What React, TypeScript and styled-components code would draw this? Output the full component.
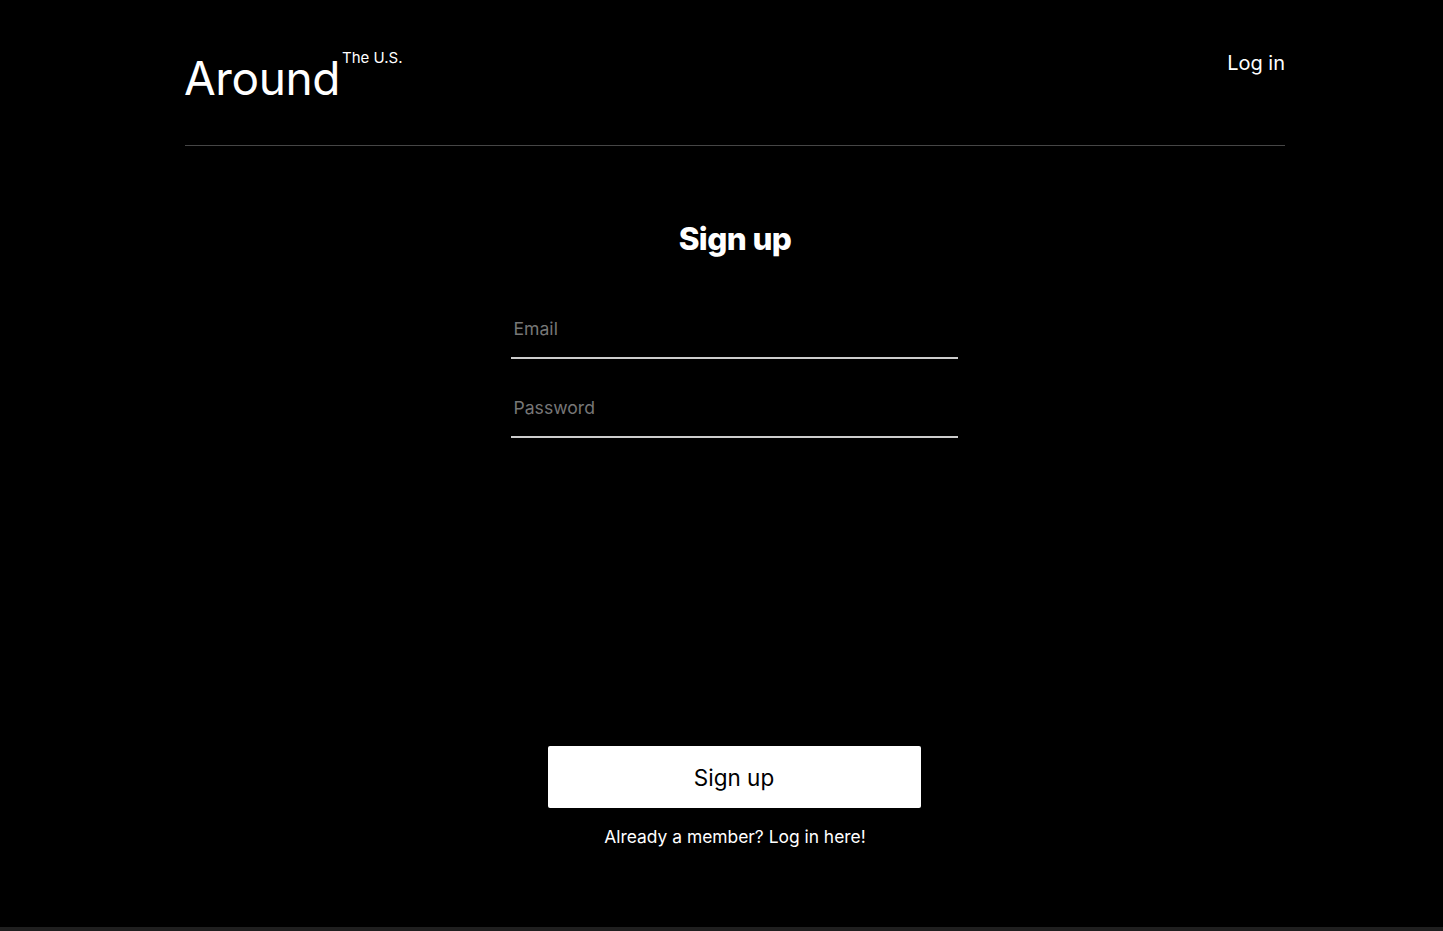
import React from "react";
import styled, { createGlobalStyle } from "styled-components";

const Global = createGlobalStyle`
  html, body { margin: 0; padding: 0; background: #1f1f1f; }
  body { font-family: Inter, "Noto Sans", sans-serif; color: #fff; }
  * { box-sizing: border-box; }
`;

const Page = styled.div`
  background: #000;
  height: 927px;
  display: flex;
  flex-direction: column;
  align-items: center;
  padding-left: 27px;
`;

const Header = styled.header`
  width: 1100px;
  height: 146px;
  border-bottom: 1px solid #464646;
  display: flex;
  justify-content: space-between;
  align-items: flex-start;
`;

const Logo = styled.div`
  display: flex;
  align-items: flex-start;
  margin-top: 49px;
  margin-left: -1px;
`;

const LogoMain = styled.span`
  font-size: 46px;
  line-height: 58px;
  font-weight: 400;
  letter-spacing: -0.4px;
`;

const LogoSup = styled.span`
  font-size: 15px;
  line-height: 18px;
  margin-left: 2px;
`;

const NavLink = styled.a`
  color: #fff;
  font-size: 20px;
  line-height: 24px;
  margin-top: 51px;
  text-decoration: none;
  cursor: pointer;
`;

const Main = styled.main`
  width: 1100px;
  display: flex;
  flex-direction: column;
  align-items: center;
`;

const Title = styled.h1`
  margin: 73px 0 0;
  font-size: 31.5px;
  line-height: 40px;
  font-weight: 800;
  letter-spacing: -0.6px;
`;

const Form = styled.form`
  width: 447px;
  display: flex;
  flex-direction: column;
  margin-top: 45px;
  margin-left: -2px;
`;

const Field = styled.input`
  background: transparent;
  border: none;
  border-bottom: 2px solid #cccccc;
  color: #fff;
  font-family: inherit;
  font-size: 17.6px;
  line-height: 22px;
  padding: 14px 3px 17px;
  outline: none;
  & + & { margin-top: 24px; }
  &::placeholder { color: #777; }
`;

const Submit = styled.button`
  align-self: center;
  width: 373px;
  height: 62px;
  margin-top: 308px;
  margin-left: -2px;
  background: #fff;
  border: none;
  border-radius: 2px;
  color: #000;
  font-family: inherit;
  font-size: 22.5px;
  cursor: pointer;
`;

const Alt = styled.a`
  margin-top: 18px;
  font-size: 17.4px;
  line-height: 22px;
  color: #fff;
  text-decoration: none;
  cursor: pointer;
`;

export default function App() {
  return (
    <>
      <Global />
      <Page>
        <Header>
          <Logo>
            <LogoMain>Around</LogoMain>
            <LogoSup>The U.S.</LogoSup>
          </Logo>
          <NavLink>Log in</NavLink>
        </Header>
        <Main>
          <Title>Sign up</Title>
          <Form onSubmit={(e) => e.preventDefault()}>
            <Field type="email" placeholder="Email" />
            <Field type="password" placeholder="Password" />
          </Form>
          <Submit type="button">Sign up</Submit>
          <Alt>Already a member? Log in here!</Alt>
        </Main>
      </Page>
    </>
  );
}
